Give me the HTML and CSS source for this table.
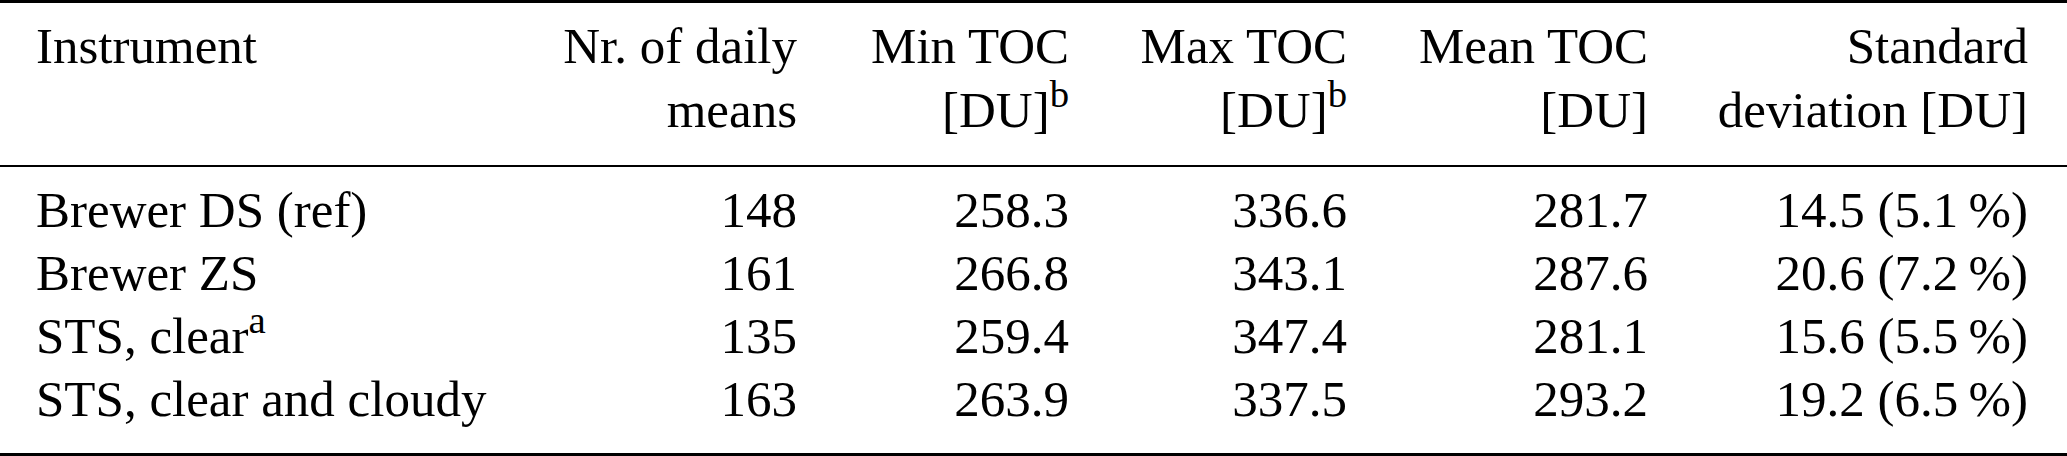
FILE: index.html
```html
<!DOCTYPE html>
<html lang="en">
<head>
  <meta charset="UTF-8">
  <meta name="viewport" content="width=device-width, initial-scale=1">
  <title>TOC statistics</title>
  <link rel="stylesheet" href="styles.css">
</head>
<body>

<!-- Total ozone column statistics per instrument -->
<table class="toc-table">
  <colgroup>
    <col class="col-name">
    <col class="col-count">
    <col class="col-min">
    <col class="col-max">
    <col class="col-mean">
    <col class="col-std">
  </colgroup>
  <thead>
    <tr>
      <th class="left">Instrument</th>
      <th>Nr. of daily<br>means</th>
      <th>Min TOC<br>[DU]<sup>b</sup></th>
      <th>Max TOC<br>[DU]<sup>b</sup></th>
      <th>Mean TOC<br>[DU]</th>
      <th class="last">Standard<br>deviation [DU]</th>
    </tr>
  </thead>
  <tbody>
    <tr>
      <td class="left">Brewer DS (ref)</td>
      <td>148</td>
      <td>258.3</td>
      <td>336.6</td>
      <td>281.7</td>
      <td class="last">14.5 (5.1&thinsp;%)</td>
    </tr>
    <tr>
      <td class="left">Brewer ZS</td>
      <td>161</td>
      <td>266.8</td>
      <td>343.1</td>
      <td>287.6</td>
      <td class="last">20.6 (7.2&thinsp;%)</td>
    </tr>
    <tr>
      <td class="left">STS, clear<sup>a</sup></td>
      <td>135</td>
      <td>259.4</td>
      <td>347.4</td>
      <td>281.1</td>
      <td class="last">15.6 (5.5&thinsp;%)</td>
    </tr>
    <tr>
      <td class="left">STS, clear and cloudy</td>
      <td>163</td>
      <td>263.9</td>
      <td>337.5</td>
      <td>293.2</td>
      <td class="last">19.2 (6.5&thinsp;%)</td>
    </tr>
  </tbody>
</table>

</body>
</html>
```

FILE: styles.css
```css
* { box-sizing: border-box; }
body {
  margin: 0;
  background: #fff;
  color: #000;
  font-family: 'Liberation Serif', 'Times New Roman', serif;
  font-size: 51px;
}

.toc-table {
  width: 2067px;
  table-layout: fixed;
  border-collapse: separate;
  border-spacing: 0;
}

.col-name { width: 500px; }
.col-count { width: 297px; }
.col-min { width: 272px; }
.col-max { width: 278px; }
.col-mean { width: 301px; }
.col-std { width: 419px; }

.toc-table th,
.toc-table td {
  padding: 0;
  text-align: right;
  white-space: nowrap;
  font-weight: normal;
}

.toc-table th {
  vertical-align: top;
  line-height: 64px;
  padding-top: 11px;
  padding-bottom: 23px;
  border-top: 3px solid #000;
  border-bottom: 2px solid #000;
}

.toc-table td {
  line-height: 63px;
}

.toc-table tbody tr:first-child td {
  padding-top: 12px;
}

.toc-table tbody tr:last-child td {
  padding-bottom: 22px;
  border-bottom: 3px solid #000;
}

.toc-table .left {
  text-align: left;
  padding-left: 36px;
}

.toc-table .last {
  padding-right: 39px;
}

sup {
  font-size: 0.76em;
  line-height: 0;
  vertical-align: 0.52em;
}
```
